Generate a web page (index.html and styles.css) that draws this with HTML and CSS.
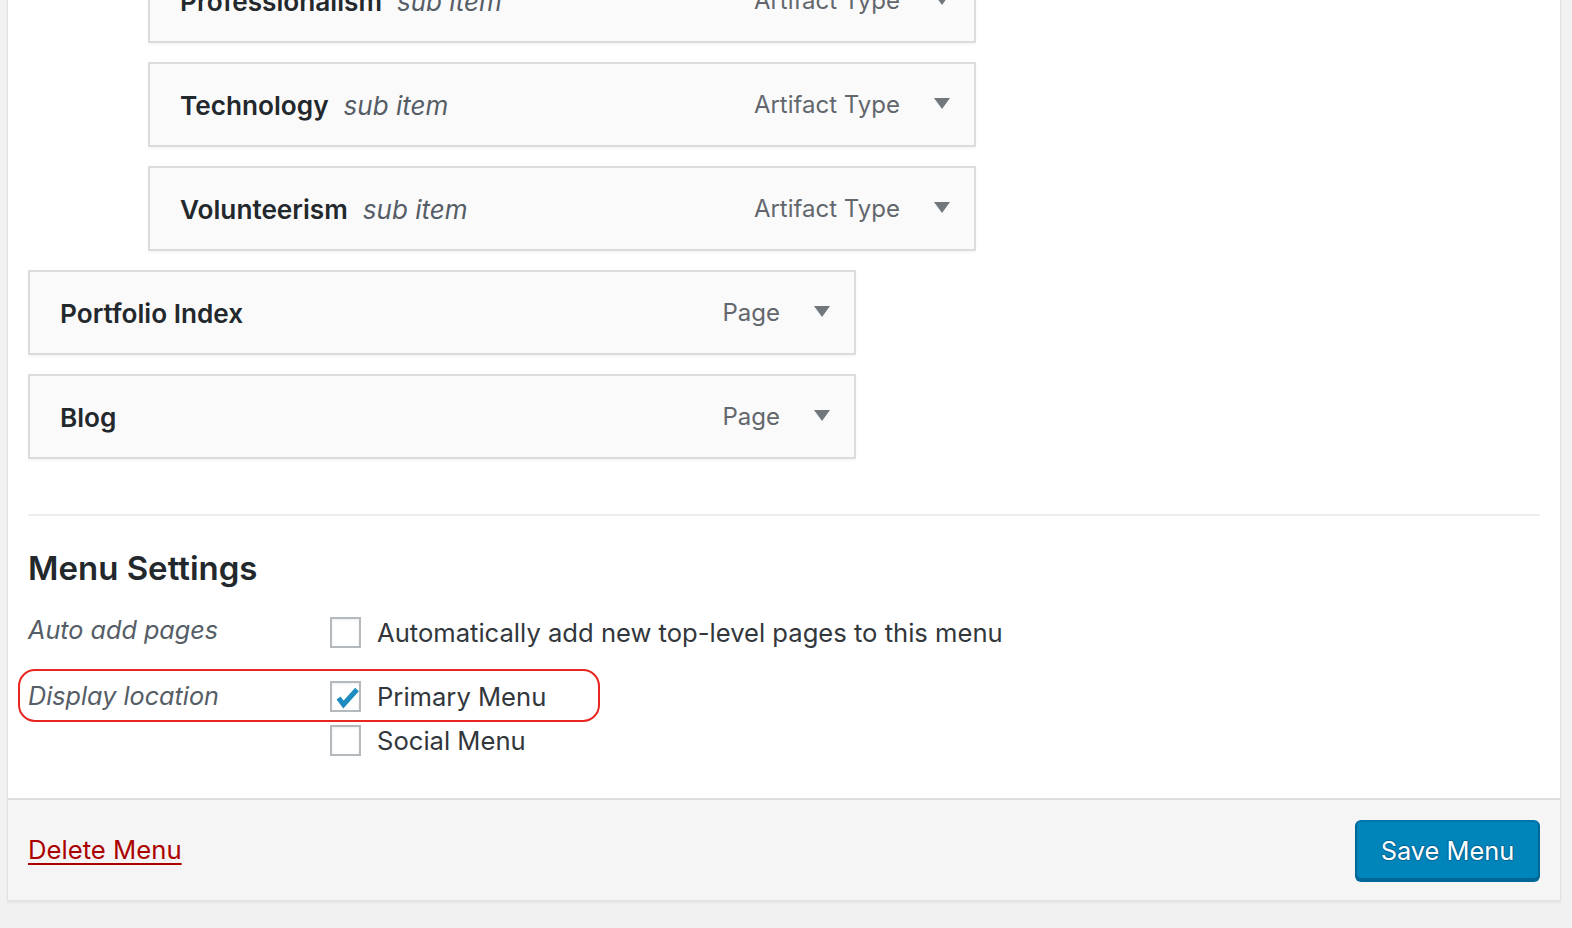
FILE: index.html
```html
<!DOCTYPE html>
<html lang="en">
<head>
<meta charset="utf-8">
<title>Menu Settings</title>
<link rel="stylesheet" href="styles.css">
</head>
<body>
<div class="panel">
  <div class="panel-body">
    <ul class="menu-list">
      <li class="menu-item depth-1">
        <div class="item-title"><span class="item-name">Professionalism</span><span class="item-sub">sub item</span></div>
        <div class="item-controls"><span class="item-type">Artifact Type</span><span class="item-toggle"></span></div>
      </li>
      <li class="menu-item depth-1">
        <div class="item-title"><span class="item-name">Technology</span><span class="item-sub">sub item</span></div>
        <div class="item-controls"><span class="item-type">Artifact Type</span><span class="item-toggle"></span></div>
      </li>
      <li class="menu-item depth-1">
        <div class="item-title"><span class="item-name">Volunteerism</span><span class="item-sub">sub item</span></div>
        <div class="item-controls"><span class="item-type">Artifact Type</span><span class="item-toggle"></span></div>
      </li>
      <li class="menu-item">
        <div class="item-title"><span class="item-name">Portfolio Index</span></div>
        <div class="item-controls"><span class="item-type">Page</span><span class="item-toggle"></span></div>
      </li>
      <li class="menu-item">
        <div class="item-title"><span class="item-name">Blog</span></div>
        <div class="item-controls"><span class="item-type">Page</span><span class="item-toggle"></span></div>
      </li>
    </ul>

    <div class="menu-settings">
      <h3 class="settings-title">Menu Settings</h3>
      <div class="setting-row row-auto">
        <div class="setting-label">Auto add pages</div>
        <div class="setting-options">
          <label class="option"><span class="checkbox"></span><span class="option-text">Automatically add new top-level pages to this menu</span></label>
        </div>
      </div>
      <div class="setting-row row-location">
        <span class="highlight"></span>
        <div class="setting-label">Display location</div>
        <div class="setting-options">
          <label class="option"><span class="checkbox checked"><svg viewBox="0 0 31 31" width="31" height="31"><polyline points="8.5,17 13.5,23.5 27,8.5" fill="none" stroke="#1e8cbe" stroke-width="5" stroke-linejoin="miter"/></svg></span><span class="option-text">Primary Menu</span></label>
          <label class="option"><span class="checkbox"></span><span class="option-text">Social Menu</span></label>
        </div>
      </div>
    </div>
  </div>
  <div class="panel-footer">
    <a class="delete-link" href="#">Delete Menu</a>
    <button class="save-button" type="button">Save Menu</button>
  </div>
</div>
</body>
</html>
```
FILE: styles.css
```css
* { box-sizing: border-box; }

html, body {
  margin: 0;
  padding: 0;
  height: 100%;
  overflow: hidden;
}

body {
  background: #f1f1f1;
  font-family: "Inter", "Roboto", sans-serif;
  color: #23282d;
}

.panel {
  margin: 0 11px 0 7px;
  background: #fff;
  border-left: 1px solid #e2e2e2;
  border-right: 1px solid #e2e2e2;
  border-bottom: 1px solid #e4e4e4;
  box-shadow: 0 2px 2px rgba(0, 0, 0, 0.05);
}

.panel-body {
  padding: 0 20px;
}

.menu-list {
  list-style: none;
  margin: -42px 0 0;
  padding: 0;
  display: flex;
  flex-direction: column;
  gap: 19px;
}

.menu-item {
  width: 828px;
  height: 85px;
  background: #fafafa;
  border: 2px solid #dcdcdc;
  box-shadow: 0 2px 2px rgba(0, 0, 0, 0.04);
  display: flex;
  align-items: center;
  justify-content: space-between;
  padding: 0 24px 0 30px;
}

.menu-item.depth-1 {
  margin-left: 120px;
}

.item-title {
  display: flex;
  align-items: baseline;
  white-space: nowrap;
  margin-top: 2px;
}

.item-name {
  font-size: 26.2px;
  font-weight: 600;
  color: #23282d;
}

.item-sub {
  margin-left: 15px;
  font-size: 26px;
  font-style: italic;
  color: #555d66;
}

.item-controls {
  display: flex;
  align-items: center;
}

.item-type {
  font-size: 24px;
  color: #62676c;
}

.item-toggle {
  margin-left: 34px;
  width: 0;
  height: 0;
  border-left: 8px solid transparent;
  border-right: 8px solid transparent;
  border-top: 11px solid #72777c;
  margin-top: -2px;
}

.menu-settings {
  margin-top: 55px;
  border-top: 2px solid #eeeeee;
  padding-bottom: 42px;
}

.settings-title {
  margin: 32px 0 29px;
  font-size: 33px;
  line-height: 40px;
  font-weight: 600;
  color: #23282d;
}

.setting-row {
  display: flex;
  position: relative;
}

.row-location {
  margin-top: 33px;
}

.setting-label {
  width: 302px;
  flex: none;
  height: 31px;
  line-height: 31px;
  font-size: 25.2px;
  font-style: italic;
  color: #555d66;
}

.row-auto .setting-label {
  margin-top: -2px;
}

.setting-options {
  display: flex;
  flex-direction: column;
  gap: 13px;
}

.option {
  display: flex;
  align-items: center;
  height: 31px;
}

.checkbox {
  width: 31px;
  height: 31px;
  flex: none;
  border: 2px solid #b4b9be;
  background: #fff;
  box-shadow: inset 0 1px 3px rgba(0, 0, 0, 0.08);
  position: relative;
}

.checkbox svg {
  position: absolute;
  left: -2px;
  top: -2px;
}

.option-text {
  margin-left: 16px;
  font-size: 25.6px;
  color: #32373c;
  white-space: nowrap;
}

.highlight {
  position: absolute;
  left: -10px;
  top: -12px;
  width: 582px;
  height: 53px;
  border: 2px solid #e8261f;
  border-radius: 17px;
  pointer-events: none;
}

.panel-footer {
  height: 102px;
  border-top: 2px solid #dedede;
  background: #f5f5f5;
  padding: 0 20px;
  display: flex;
  align-items: center;
  justify-content: space-between;
}

.delete-link {
  font-size: 25.7px;
  color: #aa0000;
  text-decoration: underline;
  text-decoration-thickness: 2px;
  text-underline-offset: 4px;
  margin-top: -2px;
}

.save-button {
  width: 185px;
  height: 60px;
  margin-top: 0;
  font-family: inherit;
  font-size: 25.4px;
  color: #fff;
  background: #0085ba;
  border: 2px solid;
  border-color: #0073aa #006799 #006799;
  border-radius: 6px;
  box-shadow: 0 2px 0 #006799;
  text-shadow: 0 -1px 1px #006799, 1px 0 1px #006799, 0 1px 1px #006799, -1px 0 1px #006799;
  padding: 0;
  cursor: pointer;
}
```
